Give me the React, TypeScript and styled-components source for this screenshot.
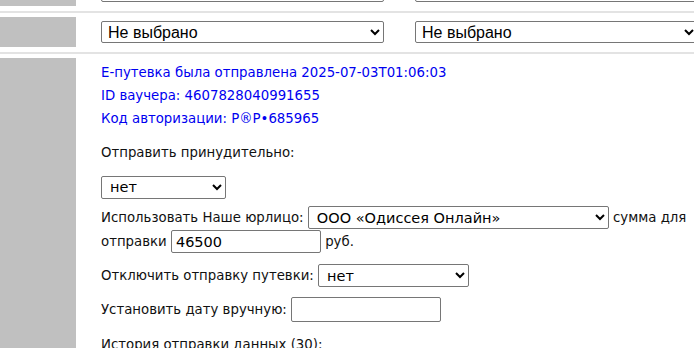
import React from 'react';
import styled, { createGlobalStyle } from 'styled-components';

const GlobalStyle = createGlobalStyle`
  html, body {
    margin: 0;
    padding: 0;
    background: #ffffff;
    overflow: hidden;
  }
  body {
    font-family: "DejaVu Sans", Tahoma, sans-serif;
    font-size: 13.3px;
    color: #111111;
  }
`;

const Page = styled.div`
  width: 694px;
  margin-top: -28px;
`;

const Row = styled.div<{ last?: boolean }>`
  display: flex;
  padding: 4px 0 ${props => (props.last ? '0' : '5px')};
  border-bottom: ${props => (props.last ? 'none' : '2px solid #e3e3e3')};
`;

const SideCell = styled.div`
  flex: 0 0 76px;
  min-height: 30px;
  background: #c0c0c0;
`;

const FilterCell = styled.div`
  flex: 1;
  display: flex;
  align-items: center;
  gap: 31px;
  padding-left: 25px;
  min-width: 0;
`;

const FilterSelect = styled.select`
  flex: 0 0 283px;
  height: 22px;
  padding: 0 2px;
  font-family: "Liberation Sans", Arial, sans-serif;
  font-size: 16px;
  color: #000;
  background: #fff;
  border: 1px solid #767676;
  border-radius: 2px;
`;

const MainCell = styled.div`
  flex: 1;
  padding: 3px 0 0 25px;
  min-width: 0;
`;

const Info = styled.div`
  color: #0000f0;
  line-height: 23px;
`;

const Para = styled.div<{ gap?: number; lh?: number }>`
  margin-top: ${props => props.gap ?? 10}px;
  line-height: ${props => props.lh ?? 23}px;
`;

const FormSelect = styled.select<{ w: number }>`
  width: ${props => props.w}px;
  height: 23px;
  padding: 0 4px;
  font-family: "DejaVu Sans", Tahoma, sans-serif;
  font-size: 14.5px;
  color: #000;
  background: #fff;
  border: 1px solid #767676;
  border-radius: 2px;
  vertical-align: middle;
`;

const TextInput = styled.input<{ w: number; h?: number }>`
  box-sizing: border-box;
  width: ${props => props.w}px;
  height: ${props => props.h ?? 23}px;
  padding: 0 4px;
  font-family: "DejaVu Sans", Tahoma, sans-serif;
  font-size: 14.5px;
  color: #000;
  border: 1px solid #767676;
  border-radius: 2px;
  vertical-align: middle;
`;

export default function App() {
  return (
    <>
      <GlobalStyle />
      <Page>
        <Row>
          <SideCell />
          <FilterCell>
            <FilterSelect defaultValue="">
              <option value="">Не выбрано</option>
            </FilterSelect>
            <FilterSelect defaultValue="">
              <option value="">Не выбрано</option>
            </FilterSelect>
          </FilterCell>
        </Row>
        <Row>
          <SideCell />
          <FilterCell>
            <FilterSelect defaultValue="">
              <option value="">Не выбрано</option>
            </FilterSelect>
            <FilterSelect defaultValue="">
              <option value="">Не выбрано</option>
            </FilterSelect>
          </FilterCell>
        </Row>
        <Row last>
          <SideCell />
          <MainCell>
            <Info>
              <div>Е-путевка была отправлена 2025-07-03T01:06:03</div>
              <div>ID ваучера: 4607828040991655</div>
              <div>Код авторизации: Р®Р•685965</div>
            </Info>
            <Para gap={11}>Отправить принудительно:</Para>
            <Para gap={11}>
              <FormSelect w={125} defaultValue="no">
                <option value="no">нет</option>
                <option value="yes">да</option>
              </FormSelect>
            </Para>
            <Para gap={7} lh={24}>
              Использовать Наше юрлицо:{' '}
              <FormSelect w={301} defaultValue="od">
                <option value="od">ООО «Одиссея Онлайн»</option>
              </FormSelect>{' '}
              сумма для отправки <TextInput w={150} defaultValue="46500" /> руб.
            </Para>
            <Para gap={10}>
              Отключить отправку путевки:{' '}
              <FormSelect w={151} defaultValue="no">
                <option value="no">нет</option>
                <option value="yes">да</option>
              </FormSelect>
            </Para>
            <Para gap={10}>
              Установить дату вручную: <TextInput w={150} h={25} />
            </Para>
            <Para gap={11}>История отправки данных (30):</Para>
          </MainCell>
        </Row>
      </Page>
    </>
  );
}
